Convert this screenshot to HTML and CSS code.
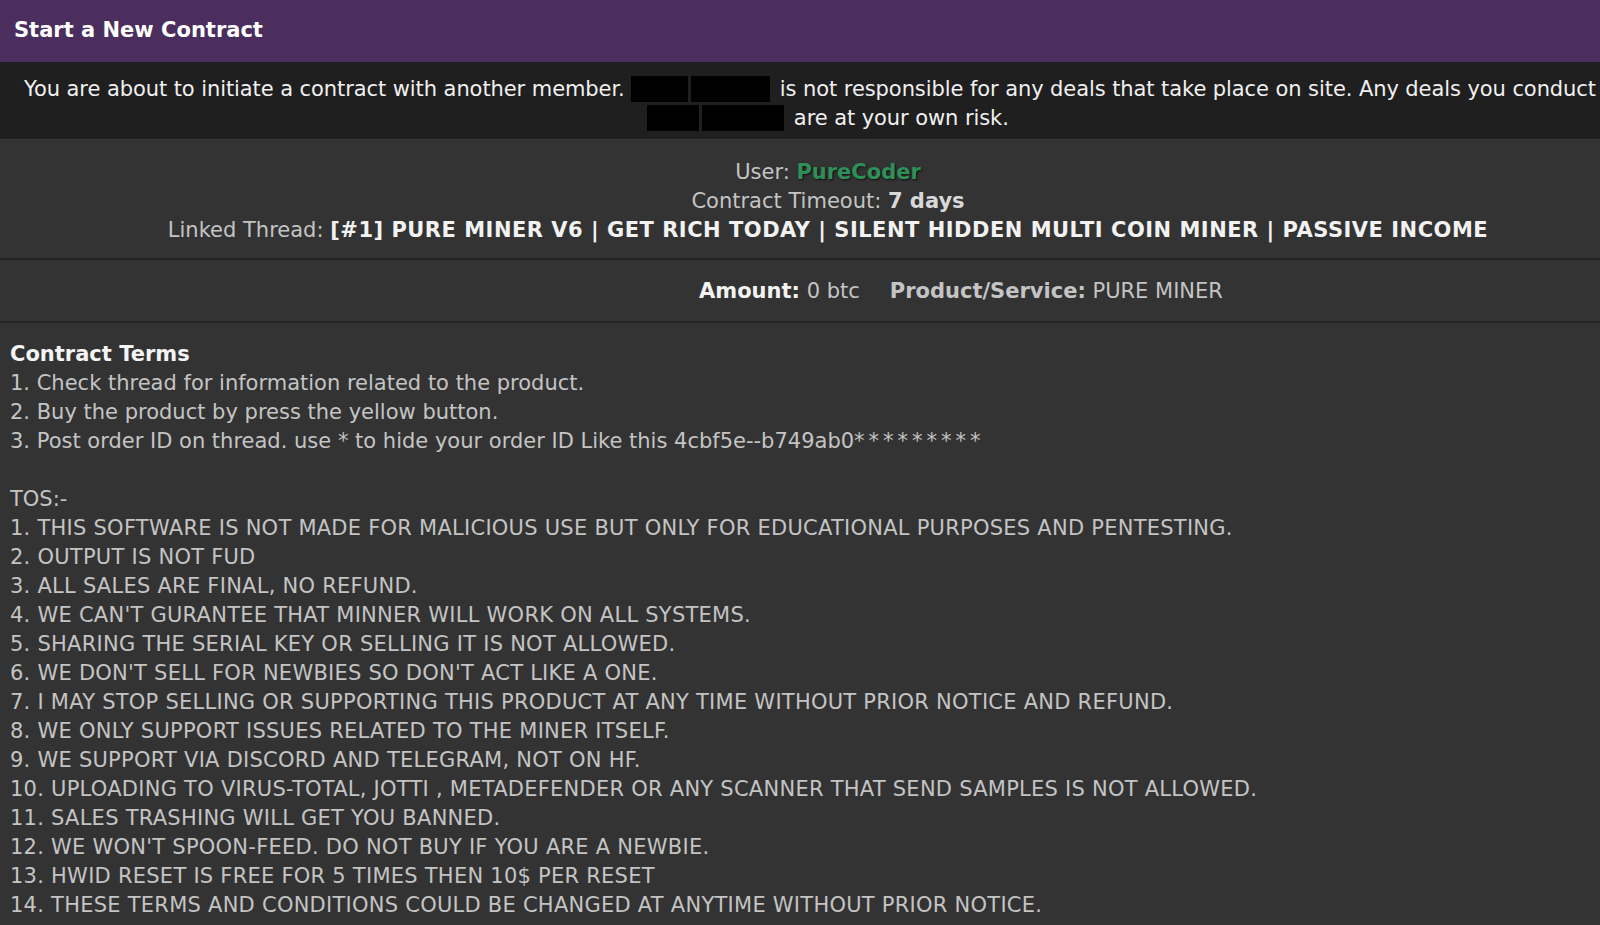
FILE: index.html
```html
<!DOCTYPE html>
<html lang="en">
<head>
  <meta charset="UTF-8">
  <title>Start a New Contract</title>
  <link rel="stylesheet" href="styles.css">
</head>
<body>

  <!-- Purple title bar -->
  <div class="thead">Start a New Contract</div>

  <!-- Warning notice -->
  <div class="notice">
    <div>You are about to initiate a contract with another member. <span class="redact r1"></span><span class="redact r2"></span> is not responsible for any deals that take place on site. Any deals you conduct</div>
    <div class="notice-end"><span class="redact r3"></span><span class="redact r4"></span> are at your own risk.</div>
  </div>

  <!-- Contract details -->
  <div class="info">
    <div>User: <span class="username">PureCoder</span></div>
    <div>Contract Timeout: <strong>7 days</strong></div>
    <div>Linked Thread: <strong class="thread">[#1] PURE MINER V6 | GET RICH TODAY | SILENT HIDDEN MULTI COIN MINER | PASSIVE INCOME</strong></div>
  </div>

  <div class="amount-row">
    <span><strong class="white">Amount:</strong> 0 btc</span>
    <span><strong>Product/Service:</strong> PURE MINER</span>
  </div>

  <!-- Terms -->
  <div class="terms">
    <div class="terms-title">Contract Terms</div>
    <div>1. Check thread for information related to the product.</div>
    <div>2. Buy the product by press the yellow button.</div>
    <div>3. Post order ID on thread. use * to hide your order ID Like this 4cbf5e--b749ab0<span class="stars">*********</span></div>
    <div class="blank"></div>
    <div>TOS:-</div>
    <div class="tos">
      <div>1. THIS SOFTWARE IS NOT MADE FOR MALICIOUS USE BUT ONLY FOR EDUCATIONAL PURPOSES AND PENTESTING.</div>
      <div>2. OUTPUT IS NOT FUD</div>
      <div>3. ALL SALES ARE FINAL, NO REFUND.</div>
      <div>4. WE CAN'T GURANTEE THAT MINNER WILL WORK ON ALL SYSTEMS.</div>
      <div>5. SHARING THE SERIAL KEY OR SELLING IT IS NOT ALLOWED.</div>
      <div>6. WE DON'T SELL FOR NEWBIES SO DON'T ACT LIKE A ONE.</div>
      <div>7. I MAY STOP SELLING OR SUPPORTING THIS PRODUCT AT ANY TIME WITHOUT PRIOR NOTICE AND REFUND.</div>
      <div>8. WE ONLY SUPPORT ISSUES RELATED TO THE MINER ITSELF.</div>
      <div>9. WE SUPPORT VIA DISCORD AND TELEGRAM, NOT ON HF.</div>
      <div>10. UPLOADING TO VIRUS-TOTAL, JOTTI , METADEFENDER OR ANY SCANNER THAT SEND SAMPLES IS NOT ALLOWED.</div>
      <div>11. SALES TRASHING WILL GET YOU BANNED.</div>
      <div>12. WE WON'T SPOON-FEED. DO NOT BUY IF YOU ARE A NEWBIE.</div>
      <div>13. HWID RESET IS FREE FOR 5 TIMES THEN 10$ PER RESET</div>
      <div>14. THESE TERMS AND CONDITIONS COULD BE CHANGED AT ANYTIME WITHOUT PRIOR NOTICE.</div>
    </div>
  </div>

</body>
</html>
```

FILE: styles.css
```css
* {
  margin: 0;
  padding: 0;
  box-sizing: border-box;
}
body {
  font-family: "DejaVu Sans", Verdana, sans-serif;
  font-size: 21px;
  line-height: 29px;
  background-color: #333333;
  color: #c4c4c4;
  overflow: hidden;
}
strong {
  font-weight: bold;
}
.thead {
  height: 62px;
  background-color: #4b2e5d;
  color: #ffffff;
  font-size: 21px;
  font-weight: bold;
  line-height: 60px;
  padding: 0 14px;
}
.notice {
  background-color: #1f1f1f;
  color: #f0f0f0;
  text-align: center;
  letter-spacing: -0.08px;
  padding: 13px 0 6px 20px;
  height: 78px;
  white-space: nowrap;
  border-bottom: 1px solid #3b3b3b;
}
.notice-end {
  padding-left: 36px;
}
.redact {
  display: inline-block;
  height: 26px;
  background-color: #000;
  vertical-align: -6px;
  margin-right: 3px;
}
.r1 { width: 57px; }
.r2 { width: 79px; }
.r3 { width: 52px; }
.r4 { width: 82px; }
.info {
  text-align: center;
  padding: 18px 0 13px 56px;
  border-bottom: 2px solid #232323;
}
.info strong {
  color: #d8d8d8;
}
.info .thread {
  color: #f2f2f2;
  letter-spacing: 0.5px;
}
.username {
  color: #2f8f58;
  font-weight: bold;
  text-shadow: 1px 1px 2px #111;
}
.amount-row {
  display: flex;
  justify-content: center;
  gap: 30px;
  padding: 17px 0 15px 322px;
  border-bottom: 2px solid #232323;
}
.amount-row strong {
  color: #c4c4c4;
}
.amount-row .white {
  color: #f2f2f2;
}
.terms {
  padding: 17px 10px 0;
}
.terms-title {
  color: #f4f4f4;
  font-weight: bold;
}
.stars {
  letter-spacing: 4px;
}
.tos {
  letter-spacing: 0.25px;
}
.blank {
  height: 29px;
}
```
